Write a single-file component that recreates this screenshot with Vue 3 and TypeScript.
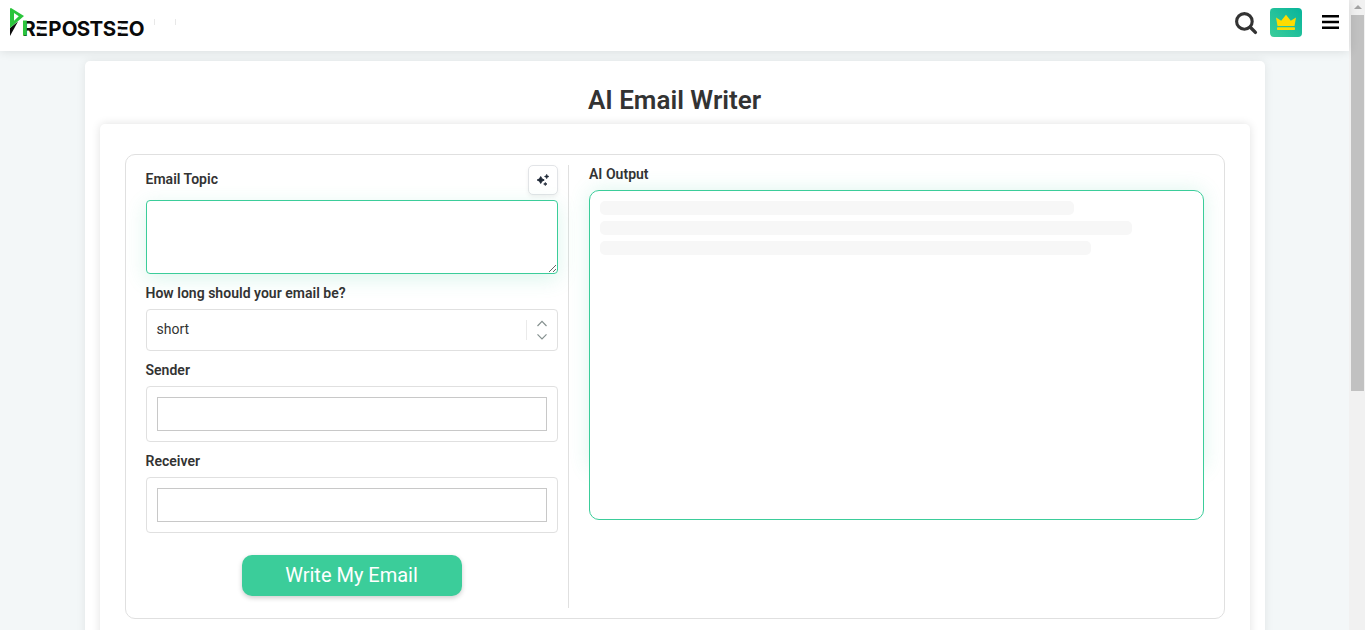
<script setup lang="ts">
import { ref } from 'vue'

const topic = ref('')
const emailLength = ref('short')
const sender = ref('')
const receiver = ref('')

const skeletonLines: number[] = [474, 532, 491]
</script>

<template>
  <div class="screen">
    <div class="page">
      <header class="header">
        <div class="brand">
          <svg class="logo" width="136" height="30" viewBox="0 0 136 30">
            <path d="M0 20 L8 13.5 L0 28 Z" fill="#0a0a0a" />
            <path d="M1 0 L14 8 L0 20 V1 Q0 0 1 0 Z M4 5 V12.8 L8.8 8.2 Z" fill="#2bc53c" fill-rule="evenodd" />
            <text class="wordmark" y="27.5" x="12.2 25.6 38.2 51.7 66.8 79.5 92.8 106.6 118.8">REPOSTSEO</text>
            <rect x="13" y="12.5" width="3.8" height="15" fill="#2bc53c" />
            <!-- the E is three loose bars -->
            <path d="M26 15.2 h4.4 v3.4 h-4.4z M26 21.3 h4.4 v3.5 h-4.4z M107 15.2 h4.4 v3.4 h-4.4z M107 21.3 h4.4 v3.5 h-4.4z" fill="#fff" />
          </svg>
          <i class="tick"></i>
          <i class="tick"></i>
        </div>
        <div class="tools">
          <svg class="search" width="23" height="23" viewBox="0 0 23 23" fill="none" stroke="#333">
            <circle cx="9.4" cy="9.4" r="7.8" stroke-width="3.1" />
            <path d="M15.3 15.3 L20.4 20.4" stroke-width="3.4" stroke-linecap="round" />
          </svg>
          <div class="premium">
            <svg width="22" height="17" viewBox="0 0 22 17" fill="#ffdc00">
              <path d="M1 3.6 L6.2 6.7 L11 .8 L15.8 6.7 L21 3.6 L19.5 12 H2.5 Z" />
              <rect x="2" y="13.2" width="18" height="2.8" rx=".7" />
            </svg>
          </div>
          <svg class="menu" width="18" height="16" viewBox="0 0 18 16" fill="#000">
            <path d="M1 1 h17 v2.4 h-17z M1 6.8 h17 v2.4 h-17z M1 12.6 h17 v2.4 h-17z" />
          </svg>
        </div>
      </header>

      <main class="card">
        <h1>AI Email Writer</h1>
        <section class="tool">
          <div class="box">
            <form class="left" @submit.prevent>
              <div class="topic-head">
                <label>Email Topic</label>
                <button type="button" class="sparkle">
                  <svg width="14" height="14" viewBox="0 0 14 14" fill="#1f2937">
                    <path d="M4.7 3.6 L5.9 5.8 L8.2 7 L5.9 8.2 L4.7 10.4 L3.5 8.2 L1.2 7 L3.5 5.8 Z" stroke="#1f2937" stroke-width="1" stroke-linejoin="round" />
                    <path d="M10.7 1.2 L11.4 2.8 L13 3.5 L11.4 4.2 L10.7 5.8 L10 4.2 L8.4 3.5 L10 2.8 Z" stroke="#1f2937" stroke-width=".5" stroke-linejoin="round" />
                    <path d="M9.3 9.5 L9.9 10.4 L10.9 11 L9.9 11.6 L9.3 12.5 L8.7 11.6 L7.7 11 L8.7 10.4 Z" stroke="#1f2937" stroke-width=".8" stroke-linejoin="round" />
                  </svg>
                </button>
              </div>
              <textarea v-model="topic"></textarea>
              <label class="field-label">How long should your email be?</label>
              <div class="select">
                <span>{{ emailLength }}</span>
                <div class="arrows">
                  <svg width="10" height="22" viewBox="0 0 10 22" fill="none" stroke="#85908f" stroke-width="1.2">
                    <path d="M.5 7 L5 2.3 L9.5 7 M.5 15.3 L5 20 L9.5 15.3" />
                  </svg>
                </div>
              </div>
              <label class="field-label">Sender</label>
              <div class="input-box"><input v-model="sender" type="text"></div>
              <label class="field-label">Receiver</label>
              <div class="input-box"><input v-model="receiver" type="text"></div>
              <button class="submit">Write My Email</button>
            </form>
            <div class="right">
              <label>AI Output</label>
              <div class="output-wrap">
                <div class="output">
                  <div v-for="(w, i) in skeletonLines" :key="i" class="line" :style="{ width: w + 'px' }"></div>
                </div>
              </div>
            </div>
          </div>
        </section>
      </main>
    </div>
    <div class="scrollbar">
      <svg width="8" height="4" viewBox="0 0 8 4"><path d="M0 4 L4 0 L8 4Z" fill="#a3a3a3" /></svg>
      <div class="thumb"></div>
    </div>
  </div>
</template>

<style>
body {
  margin: 0;
  overflow: hidden;
}
</style>

<style scoped>
* {
  box-sizing: border-box;
}
.screen {
  display: flex;
  height: 630px;
  overflow: hidden;
  font-family: Roboto, "Liberation Sans", sans-serif;
  color: #333;
  background: #f3f7f8;
}
.page {
  width: 1349px;
  display: flex;
  flex-direction: column;
}
.header {
  position: relative;
  z-index: 2;
  height: 51px;
  flex: none;
  display: flex;
  justify-content: space-between;
  background: #fff;
  box-shadow: 0 0 10px rgba(0, 0, 0, .12);
}
.brand {
  display: flex;
  padding: 8px 0 0 10px;
}
.logo {
  display: block;
  overflow: visible;
}
.wordmark {
  font: 700 20.5px Inter, sans-serif;
  fill: #0a0a0a;
}
.tick {
  width: 1px;
  height: 6px;
  margin: 11px 0 0 8px;
  background: #e8e8e8;
}
.tick + .tick {
  margin-left: 20px;
}
.tools {
  display: flex;
  align-items: flex-start;
  padding: 8px 9px 0 0;
}
.search {
  margin: 4px 12px 0 0;
}
.premium {
  width: 32px;
  height: 29px;
  border-radius: 4px;
  display: flex;
  align-items: center;
  justify-content: center;
  background: linear-gradient(45deg, #3bcd9a, #07b49b);
}
.menu {
  margin: 6px 1px 0 19px;
}
.card {
  width: 1180px;
  height: 700px;
  flex: none;
  margin: 10px auto 0;
  padding: 23px 15px 0;
  border-radius: 5px;
  background: #fff;
  box-shadow: 0 0 10px rgba(0, 0, 0, .08);
}
h1 {
  margin: 0 0 8px;
  font-size: 26px;
  line-height: 32px;
  font-weight: 600;
  text-align: center;
}
.tool {
  height: 600px;
  padding: 30px 25px;
  border-radius: 5px;
  box-shadow: 0 0 10px rgba(0, 0, 0, .12);
}
.box {
  height: 465px;
  display: flex;
  padding: 10px 20px;
  border: 1px solid #e0e0e0;
  border-radius: 10px;
}
.left {
  width: 423px;
  height: 443px;
  flex: none;
  display: flex;
  flex-direction: column;
  padding-right: 10px;
  border-right: 1px solid #e0e0e0;
}
label {
  font-size: 14px;
  line-height: 18px;
  font-weight: 600;
  letter-spacing: .02px;
}
.topic-head {
  height: 30px;
  margin-bottom: 5px;
  display: flex;
  justify-content: space-between;
}
.topic-head label {
  padding-top: 5px;
}
.sparkle {
  width: 30px;
  height: 30px;
  padding: 0;
  display: flex;
  align-items: center;
  justify-content: center;
  border: 1px solid #e2e4e7;
  border-radius: 5px;
  background: #fff;
  box-shadow: 0 2px 4px rgba(0, 0, 0, .06);
}
textarea {
  display: block;
  width: 100%;
  height: 74px;
  margin: 0;
  flex: none;
  border: 1px solid #3bcd9a;
  border-radius: 4px;
  outline: none;
  box-shadow: 0 5px 20px rgba(59, 205, 154, .18);
}
.field-label {
  margin: 10px 0 7px;
}
.select {
  height: 42px;
  flex: none;
  display: flex;
  align-items: center;
  justify-content: space-between;
  padding: 0 10px;
  border: 1px solid #e0e0e0;
  border-radius: 4px;
  font-size: 14px;
}
.select span {
  padding-bottom: 3px;
}
.arrows {
  height: 20px;
  display: flex;
  align-items: center;
  padding-left: 10px;
  border-left: 1px solid #eaeaea;
}
.input-box {
  height: 56px;
  flex: none;
  padding: 10px;
  border: 1px solid #e0e0e0;
  border-radius: 4px;
}
.input-box input {
  display: block;
  width: 100%;
  height: 34px;
  border: 1px solid #c8c8c8;
  outline: none;
}
.submit {
  width: 220px;
  height: 41px;
  flex: none;
  margin: 22px auto 0;
  padding: 0 0 2px;
  border: 0;
  border-radius: 10px;
  background: #3bcd9a;
  color: #fff;
  font-family: inherit;
  font-size: 20px;
  box-shadow: 0 2px 5px rgba(0, 0, 0, .2);
}
.right {
  flex: 1;
  padding-left: 20px;
}
.right label {
  display: block;
  margin-bottom: 7px;
  padding-left: .5px;
}
.output-wrap {
  position: relative;
}
.output-wrap::before {
  content: "";
  position: absolute;
  inset: 0 0 50px;
  border-radius: 10px;
  box-shadow: 0 0 20px rgba(59, 205, 154, .18);
}
.output {
  position: relative;
  height: 330px;
  padding: 10px;
  display: flex;
  flex-direction: column;
  gap: 6px;
  border: 1px solid #3bcd9a;
  border-radius: 10px;
  background: #fff;
}
.line {
  height: 14px;
  border-radius: 5px;
  background: #f7f7f7;
}
.scrollbar {
  width: 16px;
  padding: 5px 1px 0 2px;
  display: flex;
  flex-direction: column;
  align-items: center;
  background: #f1f1f1;
}
.thumb {
  width: 13px;
  height: 376px;
  margin-top: 6px;
  background: #c1c1c1;
}
</style>
